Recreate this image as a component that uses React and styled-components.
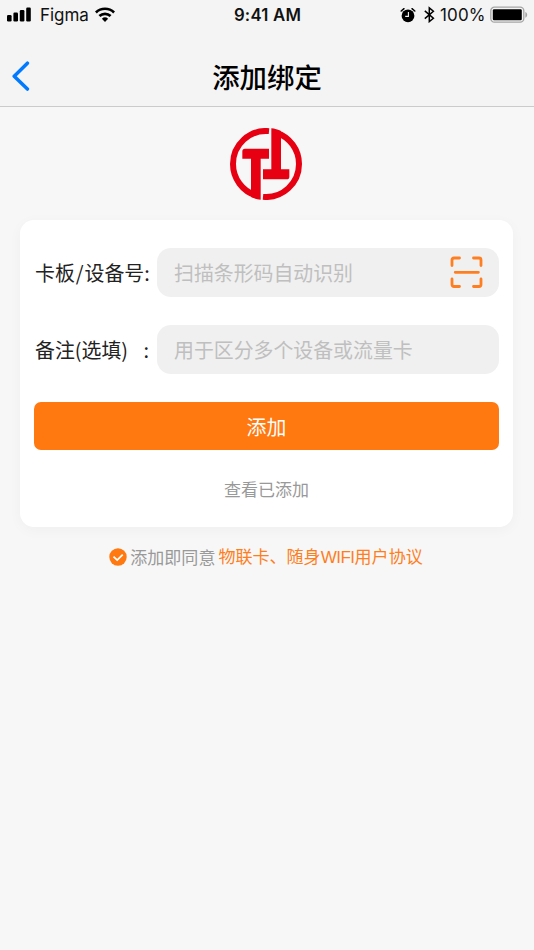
import React from "react";
import styled, { createGlobalStyle } from "styled-components";

const GlobalStyle = createGlobalStyle`
  * { box-sizing: border-box; }
  body { margin: 0; background: #f7f7f7; }
  button, input { font: inherit; border: 0; padding: 0; background: none; }
  svg { display: block; flex: none; }
`;

const Screen = styled.div`
  width: 534px;
  height: 950px;
  overflow: hidden;
  background: #f7f7f7;
  font-family: "Noto Sans CJK SC", sans-serif;
`;

const Header = styled.header`
  height: 107px;
  background: #f4f4f4;
  border-bottom: 1px solid #cbcbcb;
`;

const StatusBar = styled.div`
  height: 29px;
  padding: 0 6px 0 7px;
  display: grid;
  grid-template-columns: 1fr auto 1fr;
  align-items: center;
  font-family: Inter, sans-serif;
  font-size: 17px;
  line-height: 27px;
  color: #111;
`;

const StatusGroup = styled.div`
  display: flex;
  align-items: center;
  justify-content: ${(p) => (p.$end ? "flex-end" : "flex-start")};
`;

const Carrier = styled.span`
  width: 49px;
  margin: 0 6px 0 8px;
  padding-top: 2px;
  letter-spacing: -0.05px;
`;

const Clock = styled.span`
  padding-top: 2px;
  font-weight: 600;
  font-size: 16.8px;
  letter-spacing: 0.2px;
`;

const Percent = styled.span`
  width: 45px;
  margin: 0 5px;
  padding-top: 2px;
  white-space: nowrap;
  letter-spacing: 0.15px;
`;

const Gap = styled.span`
  width: 8px;
`;

const NavBar = styled.div`
  height: 77px;
  padding: 0 11px 1px;
  display: grid;
  grid-template-columns: 20px 1fr 20px;
  align-items: center;
`;

const BackButton = styled.button`
  height: 30px;
  margin-top: 18px;
`;

const Title = styled.h1`
  margin: 18px 0 0;
  font-size: 27.4px;
  line-height: 40px;
  font-weight: 500;
  text-align: center;
  color: #000;
`;

const Content = styled.main`
  padding: 21px 1px 0 0;
  display: flex;
  flex-direction: column;
  align-items: center;
`;

const Card = styled.form`
  width: 493px;
  height: 307px;
  margin-top: 20px;
  padding: 28px 14px 0;
  border-radius: 14px;
  background: #fff;
  box-shadow: 0 3px 14px rgba(0, 0, 0, 0.035);
`;

const Field = styled.label`
  height: 49px;
  margin-bottom: 28px;
  display: flex;
  align-items: center;
`;

const FieldLabel = styled.span`
  width: 123px;
  padding: 0 8px 0 1px;
  display: flex;
  justify-content: space-between;
  white-space: nowrap;
  font-size: 19.9px;
  line-height: 30px;
  color: #222;
`;

const Slash = styled.span`
  margin: 0 1px;
`;

const InputBox = styled.span`
  flex: 1;
  height: 49px;
  padding: 0 16px 0 17px;
  border-radius: 14px;
  display: flex;
  align-items: center;
  background: #f0f0f0;
`;

const Input = styled.input`
  flex: 1;
  min-width: 0;
  height: 36px;
  font-size: 19.9px;
  outline: none;
  &::placeholder { color: #bfbfbf; opacity: 1; }
`;

const SubmitButton = styled.button`
  width: 100%;
  height: 48px;
  border-radius: 7px;
  background: #ff7810;
  color: #fff;
  font-size: 19.9px;
  display: block;
`;

const ViewAdded = styled.button`
  display: block;
  margin: 25px auto 0;
  font-size: 17px;
  line-height: 28px;
  color: #999;
`;

const Agreement = styled.div`
  margin-top: 15px;
  padding-right: 1px;
  display: flex;
  align-items: center;
  font-size: 17.05px;
  line-height: 28px;
  color: #999;
`;

const AgreeText = styled.span`
  margin-left: 3px;
`;

const AgreeLink = styled.a`
  margin-left: 3px;
  padding-top: 2px;
  color: #ff7e1c;
  font-family: "Liberation Sans", "Noto Sans CJK SC", sans-serif;
`;

const Latin = styled.span`
  letter-spacing: -0.5px;
`;

const SignalIcon = () => (
  <svg width="25" height="15" viewBox="0 0 25 15">
    <rect x="0" y="8" width="4.6" height="6.5" rx="1.2" />
    <rect x="6.4" y="5.5" width="4.6" height="9" rx="1.2" />
    <rect x="12.8" y="3" width="4.6" height="11.5" rx="1.2" />
    <rect x="19.2" y=".5" width="4.6" height="14" rx="1.2" />
  </svg>
);

const WifiIcon = () => (
  <svg width="20" height="15" viewBox="0 0 20 15" fill="none" stroke="#000" strokeWidth="2.7">
    <path d="M.9 5.4a13.2 13.2 0 0 1 18.2 0" />
    <path d="M4.4 9a8.2 8.2 0 0 1 11.2 0" />
    <path d="M6.9 11.7a4.7 4.7 0 0 1 6.2 0L10 14.9z" fill="#000" stroke="none" />
  </svg>
);

const AlarmIcon = () => (
  <svg width="16" height="16" viewBox="0 0 16 16" fill="none">
    <circle cx="8" cy="8.8" r="6.4" fill="#000" />
    <path d="M1.2 4 4 1.7M14.8 4 12 1.7" stroke="#000" strokeWidth="1.5" strokeLinecap="round" />
    <path d="M8.4 5v4.4H5.2" stroke="#f4f4f4" strokeWidth="1.1" />
  </svg>
);

const BluetoothIcon = () => (
  <svg width="11" height="17" viewBox="0 0 11 17" fill="none" stroke="#000" strokeWidth="1.5">
    <path d="M.8 4.9 9.4 12.3 5.3 15.6V1.8L9.4 5.2.8 12.6" />
  </svg>
);

const BatteryIcon = () => (
  <svg width="38" height="17" viewBox="0 0 38 17">
    <rect x=".8" y="1.2" width="33" height="15" rx="3.6" fill="none" stroke="#a5a5a5" strokeWidth="1.3" />
    <rect x="2.8" y="3.2" width="29" height="11" rx="1.2" />
    <path d="M35.3 6.1c2.5.8 2.5 4.8 0 5.6z" fill="#a5a5a5" />
  </svg>
);

const BackIcon = () => (
  <svg width="20" height="30" viewBox="0 0 20 30" fill="none" stroke="#007aff" strokeWidth="3.5" strokeLinecap="round" strokeLinejoin="round">
    <path d="M16.4 2.2 3.2 15.2l13.2 12.9" />
  </svg>
);

const Logo = () => (
  <svg width="73" height="72" viewBox="0 0 219 216" fill="#e60012">
    <path d="M117 9.41A99 99 0 0 0 9 108A99 99 0 0 0 79 202.66" fill="none" stroke="#e60012" strokeWidth="18" />
    <path d="M138 13.65A99 99 0 0 1 207 108A99 99 0 0 1 99 206.59" fill="none" stroke="#e60012" strokeWidth="18" />
    <path d="M45 62h72v30H92v123c-10-1-20-4-29-8V92H37V70q0-8 8-8z" />
    <path d="M124 1c10 1 20 4 29 8v115h25v22q0 8-8 8H99v-30h25z" />
  </svg>
);

const ScanIcon = () => (
  <svg width="33" height="33" viewBox="0 0 33 33" fill="none" stroke="#ff7f20" strokeWidth="2.8" strokeLinecap="round" strokeLinejoin="round">
    <path d="M2 9.5V4q0-2 2-2h5.5M23.5 2H29q2 0 2 2v5.5M31 23v5.5q0 2-2 2h-5.5M9.5 30.5H4q-2 0-2-2V23M5.2 16.3h23.2" />
  </svg>
);

const CheckIcon = () => (
  <svg width="18" height="18" viewBox="0 0 18 18" fill="none">
    <circle cx="9" cy="9" r="8.7" fill="#ff7810" />
    <path d="m4.5 8.6 3.7 3.5 5.5-5.4" stroke="#fff" strokeWidth="1.8" />
  </svg>
);

export default function App() {
  return (
    <Screen>
      <GlobalStyle />
      <Header>
        <StatusBar>
          <StatusGroup>
            <SignalIcon />
            <Carrier>Figma</Carrier>
            <WifiIcon />
          </StatusGroup>
          <Clock>9:41 AM</Clock>
          <StatusGroup $end>
            <AlarmIcon />
            <Gap />
            <BluetoothIcon />
            <Percent>100%</Percent>
            <BatteryIcon />
          </StatusGroup>
        </StatusBar>
        <NavBar>
          <BackButton type="button" aria-label="返回"><BackIcon /></BackButton>
          <Title>添加绑定</Title>
        </NavBar>
      </Header>
      <Content>
        <Logo />
        <Card>
          <Field>
            <FieldLabel><span>卡板<Slash>/</Slash>设备号</span><span>:</span></FieldLabel>
            <InputBox>
              <Input placeholder="扫描条形码自动识别" />
              <ScanIcon />
            </InputBox>
          </Field>
          <Field>
            <FieldLabel><span>备注(选填)</span><span>:</span></FieldLabel>
            <InputBox>
              <Input placeholder="用于区分多个设备或流量卡" />
            </InputBox>
          </Field>
          <SubmitButton type="button">添加</SubmitButton>
          <ViewAdded type="button">查看已添加</ViewAdded>
        </Card>
        <Agreement>
          <CheckIcon />
          <AgreeText>添加即同意</AgreeText>
          <AgreeLink>物联卡、随身<Latin>WIFI</Latin>用户协议</AgreeLink>
        </Agreement>
      </Content>
    </Screen>
  );
}
